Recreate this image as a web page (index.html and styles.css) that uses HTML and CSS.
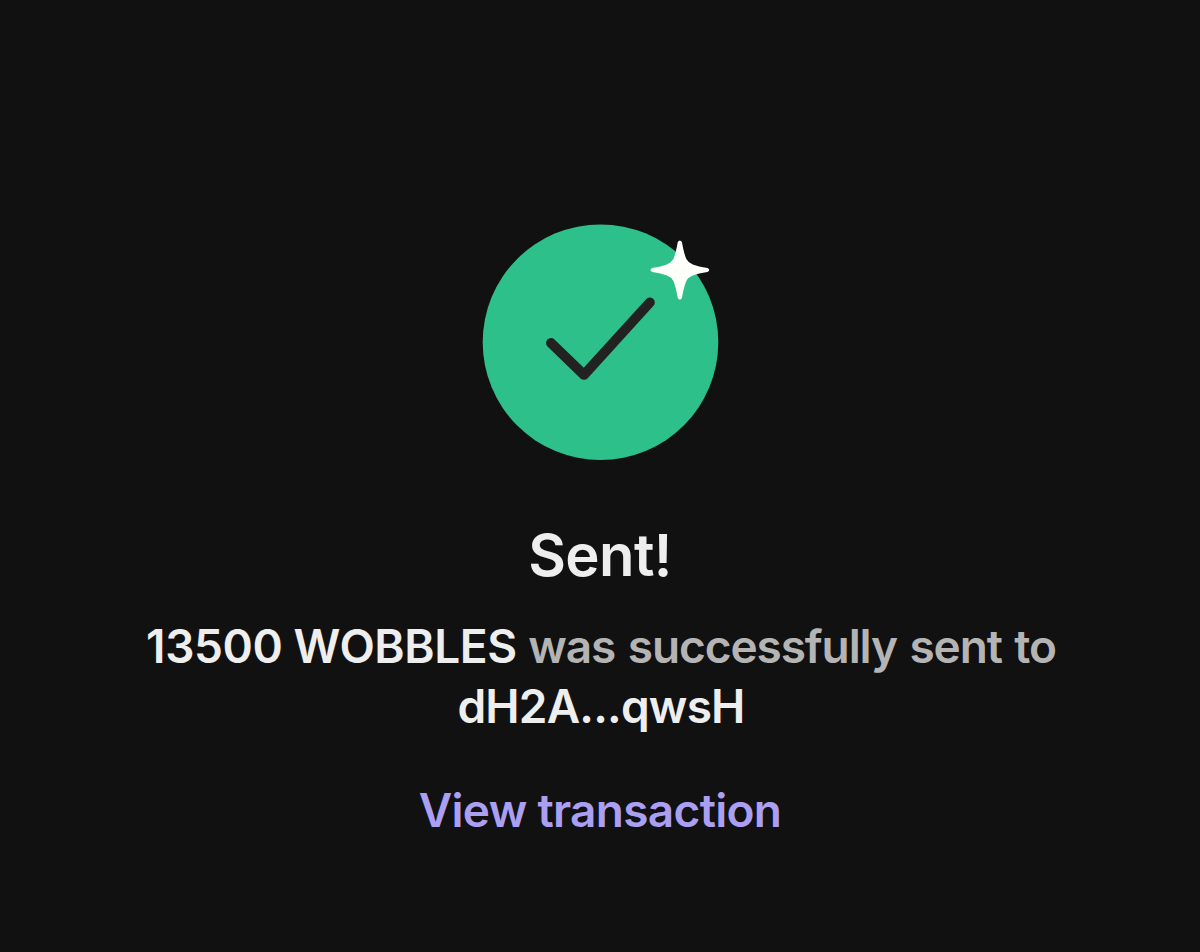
FILE: index.html
```html
<!DOCTYPE html>
<html lang="en">
<head>
    <meta charset="UTF-8">
    <meta name="viewport" content="width=device-width, initial-scale=1.0">
    <title>Sent</title>
    <link rel="stylesheet" href="styles.css">
</head>
<body>
    <main class="container">
        <svg class="success-icon" viewBox="0 0 236 236" aria-hidden="true">
            <circle cx="118.500" cy="118.200" r="117.800" fill="#2ec08b"/>
            <path d="M69 119L102 150.800L167.800 78.500" fill="none" stroke="#222" stroke-width="10" stroke-linecap="round" stroke-linejoin="round"/>
            <path d="M195.800 18Q197.800 14.800 199.900 18C201.200 25 202.300 30 204.300 35Q206.500 39 210.800 40.500C215 42.300 219 42.700 225.500 44Q229 46 225.500 48C219 49.300 215 49.700 210.800 51.500Q206.500 53 204.300 57C202.300 62 201.200 67 199.900 74Q197.800 77.200 195.800 74C194.500 67 193.400 62 191.400 57Q189.200 53 184.900 51.500C180.700 49.700 176.700 49.300 170.200 48Q166.700 46 170.200 44C176.700 42.700 180.700 42.300 184.900 40.500Q189.200 39 191.400 35C193.400 30 194.500 25 195.800 18Z" fill="#fffffb"/>
        </svg>
        <h1 class="title">Sent!</h1>
        <p class="message">
            <span class="line"><strong class="amount">13500 WOBBLES</strong> <span class="detail">was successfully sent to</span></span>
            <strong class="line recipient">dH2A...qwsH</strong>
        </p>
        <a class="link" href="#">View transaction</a>
    </main>
</body>
</html>
```

FILE: styles.css
```css
body {
    margin: 0;
    background: #111;
    color: #eee;
    font-family: Inter, sans-serif;
    -webkit-font-smoothing: antialiased;
}
.container {
    box-sizing: border-box;
    min-height: 952px;
    padding-top: 224px;
    display: flex;
    flex-direction: column;
    align-items: center;
}
.success-icon {
    width: 236px;
    height: 236px;
    overflow: visible;
}
.title {
    margin: 59px 0 0;
    font-size: 58px;
    line-height: 72px;
    font-weight: 600;
    letter-spacing: -0.6px;
}
.message {
    margin: 25px 0 0;
    padding-left: 2px;
    font-size: 46px;
    line-height: 60px;
    font-weight: 600;
    text-align: center;
}
.line {
    display: block;
    white-space: nowrap;
}
.amount {
    font-weight: 600;
    letter-spacing: -0.4px;
}
.detail {
    color: #b4b4b4;
    letter-spacing: -1.1px;
    word-spacing: 2px;
}
.recipient {
    font-weight: 600;
    letter-spacing: -0.8px;
}
.link {
    margin-top: 44px;
    color: #ab9ff2;
    font-size: 46px;
    line-height: 60px;
    font-weight: 600;
    letter-spacing: -0.7px;
    text-decoration: none;
}
```
